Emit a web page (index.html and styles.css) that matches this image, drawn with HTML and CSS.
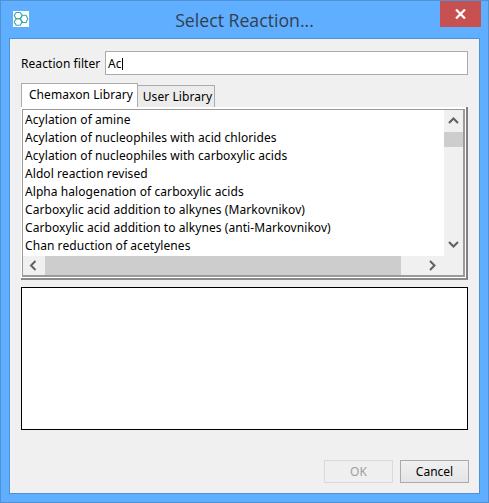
FILE: index.html
```html
<!DOCTYPE html>
<html lang="en">
<head>
<meta charset="utf-8">
<title>Select Reaction...</title>
<link rel="stylesheet" href="styles.css">
</head>
<body>
<div class="window">
  <header class="titlebar">
    <svg class="app-icon" width="16" height="16" viewBox="0 0 16 16">
      <rect width="16" height="16" fill="#fff"/>
      <g fill="none" stroke="#38a6a6" stroke-width="1.100">
        <path d="M3.200 1.500h4l2 3-2 3.200h-4l-2-3.200z"/>
        <path d="M3.200 7.700h4l2 3-2 3.500h-4l-2-3.500z"/>
        <path d="M9.300 4.200h3.700l1.800 3.600-1.800 3.700H9.300L7.400 7.800z"/>
      </g>
    </svg>
    <h1 class="title">Select Reaction...</h1>
    <button class="close" aria-label="Close">
      <svg width="11" height="10" viewBox="0 0 11 10"><path d="M1 .5l9 9M10 .5l-9 9" stroke="#fff" stroke-width="2.200" fill="none"/></svg>
    </button>
  </header>
  <main class="content">
    <div class="filter-row">
      <label class="filter-label" for="filter">Reaction filter</label>
      <div class="filter-input" id="filter">Ac<span class="caret"></span></div>
    </div>
    <div class="tabs">
      <div class="tab tab-active">Chemaxon Library</div>
      <div class="tab tab-idle">User Library</div>
    </div>
    <div class="tab-panel">
      <div class="listbox">
        <div class="list-main">
          <ul class="items">
            <li>Acylation of amine</li>
            <li>Acylation of nucleophiles with acid chlorides</li>
            <li>Acylation of nucleophiles with carboxylic acids</li>
            <li>Aldol reaction revised</li>
            <li>Alpha halogenation of carboxylic acids</li>
            <li>Carboxylic acid addition to alkynes (Markovnikov)</li>
            <li>Carboxylic acid addition to alkynes (anti-Markovnikov)</li>
            <li>Chan reduction of acetylenes</li>
          </ul>
          <div class="vscroll">
            <svg class="arrow" width="19" height="22" viewBox="0 0 19 22"><path d="M5 13l4.500-4.500L14 13" fill="none" stroke="#606060" stroke-width="2"/></svg>
            <div class="vtrack"><div class="vthumb"></div></div>
            <svg class="arrow" width="19" height="24" viewBox="0 0 19 24"><path d="M5 10l4.500 4.500L14 10" fill="none" stroke="#606060" stroke-width="2"/></svg>
          </div>
        </div>
        <div class="hscroll">
          <svg class="arrow" width="22" height="19" viewBox="0 0 22 19"><path d="M12.500 5L8 9.500l4.500 4.500" fill="none" stroke="#606060" stroke-width="2"/></svg>
          <div class="hthumb"></div>
          <div class="hgap"></div>
          <svg class="arrow" width="19" height="19" viewBox="0 0 19 19"><path d="M7 5l4.500 4.500L7 14" fill="none" stroke="#606060" stroke-width="2"/></svg>
        </div>
      </div>
    </div>
    <div class="preview"></div>
    <div class="actions">
      <button class="btn btn-disabled" disabled>OK</button>
      <button class="btn">Cancel</button>
    </div>
  </main>
</div>
</body>
</html>
```
FILE: styles.css
```css
* { box-sizing: border-box; }
html, body { margin: 0; padding: 0; }
body { width: 489px; height: 503px; overflow: hidden; font-family: "Noto Sans", "Open Sans", sans-serif; font-size: 12px; letter-spacing: 0.07px; color: #000; }
.window { width: 489px; height: 503px; display: flex; flex-direction: column; background: #60aeff; border: 1px solid #4f92d4; padding: 0 8px 8px; }
.titlebar { height: 37px; flex: none; display: flex; align-items: flex-start; position: relative; }
.app-icon { margin: 10px 0 0 4px; flex: none; }
.title { position: absolute; left: 0; right: 0; top: 7px; margin: 0; text-align: center; font-family: "Open Sans", sans-serif; font-size: 17.700px; letter-spacing: 0; line-height: 24px; font-weight: 400; color: #333f4f; }
.close { position: absolute; right: -1px; top: 0; width: 41px; height: 26px; border: 0; padding: 0; background: #c75050; display: flex; align-items: center; justify-content: center; }
.content { flex: 1; background: #f0f0f0; border: 1px solid #4f92d4; padding: 12px 11px 0; display: flex; flex-direction: column; }
.filter-row { display: flex; align-items: center; gap: 5px; height: 24px; }
.filter-label { flex: none; width: 79px; line-height: 24px; padding-top: 1px; white-space: nowrap; }
.filter-input { flex: 1; height: 24px; background: #fff; border: 1px solid #ababab; line-height: 22px; padding: 1px 0 0 2px; display: flex; align-items: center; }
.caret { width: 1px; height: 12px; background: #000; }
.tabs { display: flex; align-items: flex-end; margin-top: 8px; height: 24px; }
.tab { white-space: nowrap; display: flex; align-items: center; justify-content: center; }
.tab-active { width: 117px; height: 24px; background: #fff; border: 1px solid #acacac; border-bottom: 0; padding: 0 0 2px 3px; }
.tab-idle { width: 77px; height: 22px; background: #ececec; border: 1px solid #acacac; border-left: 0; border-bottom: 0; padding-left: 3px; }
.tab-panel { height: 173px; flex: none; background: #fff; padding: 2px 1px 1px 1px; border-right: 2px solid #808080; border-bottom: 2px solid #8a8a8a; }
.listbox { height: 168px; border: 1px solid #9a9a9a; border-right-width: 2px; border-bottom-width: 2px; background: #f0f0f0; display: flex; flex-direction: column; }
.list-main { height: 146px; flex: none; display: flex; background: #fff; }
.items { flex: 1; margin: 0; padding: 1px 0 0 2px; list-style: none; overflow: hidden; }
.items li { height: 18px; line-height: 18px; white-space: nowrap; }
.vscroll { width: 19px; flex: none; background: #f0f0f0; display: flex; flex-direction: column; margin-right: 0; }
.vtrack { flex: 1; }
.vthumb { height: 15px; background: #cdcdcd; }
.arrow { flex: none; display: block; }
.hscroll { height: 19px; display: flex; flex: none; }
.hthumb { width: 356px; flex: none; background: #cdcdcd; }
.hgap { width: 22px; flex: none; }
.preview { height: 143px; flex: none; margin-top: 7px; background: #fff; border: 1px solid #000; }
.actions { margin: 30px -1px 0 0; display: flex; justify-content: flex-end; gap: 7px; }
.btn { width: 69px; height: 23px; border: 1px solid #ababab; background: linear-gradient(#f0f0f0, #e5e5e5); font: inherit; padding: 0; color: #000; }
.btn-disabled { background: #efefef; border-color: #d9d9d9; color: #a0a0a0; }
```
